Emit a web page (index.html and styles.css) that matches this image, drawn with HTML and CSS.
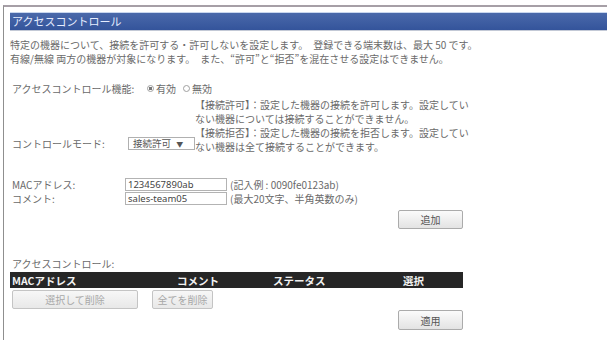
FILE: index.html
```html
<!DOCTYPE html>
<html lang="ja">
<head>
<meta charset="utf-8">
<title>アクセスコントロール</title>
<link rel="stylesheet" href="styles.css">
</head>
<body>
<div class="frame">
  <div class="titlebar">アクセスコントロール</div>
  <div class="content">
    <p class="intro">特定の機器について、接続を許可する・許可しないを設定します。　登録できる端末数は、最大 50 です。<br>有線/無線 両方の機器が対象になります。　また、“許可”と“拒否”を混在させる設定はできません。</p>
    <div class="func-row">
      <span class="func-label">アクセスコントロール機能:</span>
      <span class="radio on"></span><span class="opt">有効</span>
      <span class="radio"></span><span class="opt">無効</span>
    </div>
    <div class="mode-row">
      <div class="mode-left">
        <span class="mode-label">コントロールモード:</span>
        <span class="select">接続許可 <span class="arrow">▼</span></span>
      </div>
      <div class="desc">【接続許可】：設定した機器の接続を許可します。設定してい<br>ない機器については接続することができません。<br>【接続拒否】：設定した機器の接続を拒否します。設定してい<br>ない機器は全て接続することができます。</div>
    </div>
    <div class="field-row first">
      <span class="field-label">MACアドレス:</span>
      <input class="field" type="text" value="1234567890ab">
      <span class="hint">(記入例 : 0090fe0123ab)</span>
    </div>
    <div class="field-row">
      <span class="field-label">コメント:</span>
      <input class="field" type="text" value="sales-team05">
      <span class="hint">(最大20文字、半角英数のみ)</span>
    </div>
    <div class="right-row add-row"><button class="btn wide">追加</button></div>
    <div class="list-label">アクセスコントロール:</div>
    <div class="thead">
      <span>MACアドレス</span>
      <span>コメント</span>
      <span>ステータス</span>
      <span>選択</span>
    </div>
    <div class="btn-row">
      <button class="btn dis del-sel">選択して削除</button>
      <button class="btn dis del-all">全てを削除</button>
    </div>
    <div class="right-row apply-row"><button class="btn wide">適用</button></div>
  </div>
</div>
</body>
</html>
```

FILE: styles.css
```css
html, body {
  margin: 0;
  padding: 0;
  background: #ffffff;
}
body {
  font-family: "Noto Sans CJK JP", "Noto Sans", sans-serif;
  font-size: 10px;
  color: #6a6a6a;
  overflow: hidden;
}
.frame {
  margin: 5px 0 0 3px;
  border-top: 2px solid #a69fa6;
  border-left: 1px solid #8f8f8f;
  padding: 6px 0 0 6px;
  box-sizing: border-box;
  height: 335px;
}
.titlebar {
  height: 17px;
  line-height: 17px;
  background: linear-gradient(#4a69aa, #34549b);
  box-shadow: 0 -1px 0 #c9d7ee, 0 1px 0 #c3c9d6;
  color: #e6edff;
  font-size: 11px;
  padding-left: 2px;
}
.content {
  width: 453px;
}
.intro {
  margin: 8px 0 0;
  line-height: 14px;
  white-space: nowrap;
}
.func-row {
  margin-top: 16px;
  line-height: 13px;
  padding-left: 2px;
  display: flex;
  align-items: center;
}
.func-label {
  width: 135px;
}
.radio {
  display: inline-block;
  width: 5px;
  height: 5px;
  border: 1px solid #a0a0a0;
  border-radius: 50%;
  margin-right: 2px;
  background: #fff;
}
.radio.on {
  background: radial-gradient(circle, #777 0 1.6px, #fff 2px);
}
.opt {
  margin-right: 7px;
}
.mode-row {
  margin-top: 3px;
  display: flex;
  align-items: flex-end;
}
.mode-left {
  width: 223px;
  display: flex;
  align-items: center;
  padding-left: 2px;
  box-sizing: border-box;
  margin-bottom: 4px;
  line-height: 13px;
}
.mode-label {
  width: 116px;
}
.select {
  display: inline-block;
  width: 67px;
  height: 13px;
  box-sizing: border-box;
  border: 1px solid #b0b0b0;
  line-height: 11px;
  padding-left: 4px;
  color: #555;
  font-size: 9.5px;
}
.arrow {
  font-size: 7px;
  margin-left: 3px;
}
.desc {
  line-height: 14px;
  white-space: nowrap;
}
.field-row {
  display: flex;
  align-items: center;
  height: 14px;
  padding-left: 2px;
}
.field-row.first {
  margin-top: 23px;
}
.field-label {
  width: 113px;
}
.field {
  width: 102px;
  height: 13px;
  box-sizing: border-box;
  border: 1px solid #b3b3b3;
  padding: 0 2px;
  margin: 0;
  font-family: "Noto Sans", sans-serif;
  font-size: 9.5px;
  color: #444;
  background: #fff;
  outline: none;
}
.hint {
  margin-left: 3px;
}
.right-row {
  display: flex;
  justify-content: flex-end;
}
.add-row {
  margin-top: 5px;
}
.btn {
  height: 19px;
  box-sizing: border-box;
  border: 1px solid #ababab;
  border-radius: 2px;
  background: linear-gradient(#fbfbfb, #e3e3e3);
  font-family: "Noto Sans CJK JP", sans-serif;
  font-size: 10px;
  color: #555;
  padding: 0;
  margin: 0;
  line-height: 17px;
}
.btn.wide {
  width: 65px;
}
.btn.dis {
  color: #a8a8a8;
  border-color: #c4c4c4;
  background: linear-gradient(#f7f7f7, #e8e8e8);
}
.list-label {
  margin-top: 28px;
  line-height: 13px;
  padding-left: 2px;
}
.thead {
  margin-top: 2px;
  height: 16px;
  background: #262626;
  display: grid;
  grid-template-columns: 167px 96px 130px 1fr;
  align-items: center;
  color: #f2f2f2;
  font-weight: bold;
  font-size: 10.5px;
}
.thead span:first-child {
  padding-left: 2px;
}
.btn-row {
  margin-top: 2px;
  display: flex;
  gap: 14px;
  padding-left: 2px;
}
.del-sel {
  width: 126px;
}
.del-all {
  width: 61px;
}
.apply-row {
  margin-top: 1px;
}
.apply-row .btn {
  height: 20px;
}
```
